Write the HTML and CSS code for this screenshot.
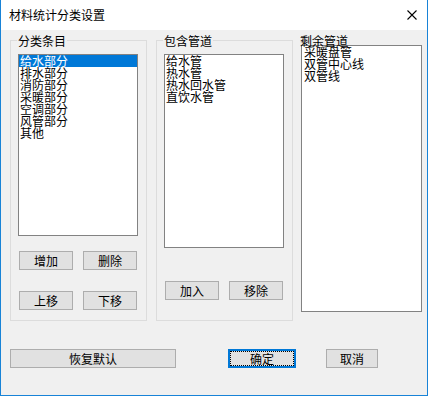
FILE: index.html
```html
<!DOCTYPE html>
<html lang="zh-CN">
<head>
    <meta charset="UTF-8">
    <title>材料统计分类设置</title>
    <link rel="stylesheet" href="styles.css">
</head>
<body>
    <div class="window">
        <div class="titlebar">
            <span class="title">材料统计分类设置</span>
            <svg class="close" width="10" height="10" viewBox="0 0 10 10">
                <path d="M0.5 0.5 L9.5 9.5 M9.5 0.5 L0.5 9.5" stroke="#000" stroke-width="1.1" fill="none"/>
            </svg>
        </div>

        <div class="dialog-body">
            <div class="panels">
                <div class="group group-cat">
                    <span class="group-title">分类条目</span>
                    <ul class="listbox list-cat">
                        <li class="selected">给水部分</li>
                        <li>排水部分</li>
                        <li>消防部分</li>
                        <li>采暖部分</li>
                        <li>空调部分</li>
                        <li>风管部分</li>
                        <li>其他</li>
                    </ul>
                    <div class="btn-row">
                        <button class="button">增加</button>
                        <button class="button">删除</button>
                    </div>
                    <div class="btn-row row-2">
                        <button class="button">上移</button>
                        <button class="button">下移</button>
                    </div>
                </div>

                <div class="group group-pipe">
                    <span class="group-title">包含管道</span>
                    <ul class="listbox list-pipe">
                        <li>给水管</li>
                        <li>热水管</li>
                        <li>热水回水管</li>
                        <li>直饮水管</li>
                    </ul>
                    <div class="btn-row">
                        <button class="button">加入</button>
                        <button class="button">移除</button>
                    </div>
                </div>

                <div class="remain">
                    <span class="remain-title">剩余管道</span>
                    <ul class="listbox list-remain">
                        <li>采暖盘管</li>
                        <li>双管中心线</li>
                        <li>双管线</li>
                    </ul>
                </div>
            </div>

            <div class="footer">
                <button class="button btn-reset">恢复默认</button>
                <button class="button btn-ok">确定</button>
                <button class="button btn-cancel">取消</button>
            </div>
        </div>
    </div>
</body>
</html>
```

FILE: styles.css
```css
* {
    margin: 0;
    padding: 0;
    box-sizing: border-box;
}

body {
    font-family: "Noto Sans CJK SC", "Microsoft YaHei", sans-serif;
    font-size: 12px;
    color: #000;
    background: #f0f0f0;
}

.window {
    width: 428px;
    height: 396px;
    display: flex;
    flex-direction: column;
    border: 1px solid #1883d7;
    border-top: none;
    background: #f0f0f0;
}

.titlebar {
    height: 30px;
    flex: none;
    display: flex;
    align-items: center;
    justify-content: space-between;
    padding: 0 10px 0 8px;
    background: #fff;
}

.title {
    line-height: 14px;
}

.close {
    display: block;
}

.dialog-body {
    flex: 1;
}

.panels {
    display: flex;
    align-items: flex-start;
    padding: 10px 0 0 9px;
}

.group {
    position: relative;
    width: 137px;
    height: 281px;
    border: 1px solid #dcdcdc;
    padding: 13px 0 0 7px;
}

.group-pipe {
    margin-left: 9px;
}

.group-title {
    position: absolute;
    top: -7px;
    left: 6px;
    padding: 0 1px;
    line-height: 13px;
    background: #f0f0f0;
}

.listbox {
    list-style: none;
    width: 120px;
    background: #fff;
    border: 1px solid #828282;
    line-height: 12px;
}

.listbox li {
    padding-left: 1px;
    white-space: nowrap;
}

.listbox .selected {
    background: #0078d7;
    color: #fff;
}

.list-cat {
    height: 182px;
}

.list-pipe {
    height: 194px;
}

.btn-row {
    display: flex;
    gap: 10px;
    padding-left: 1px;
}

.group-cat .btn-row {
    margin-top: 15px;
}

.group-cat .row-2 {
    margin-top: 21px;
}

.group-pipe .btn-row {
    margin-top: 33px;
}

.button {
    width: 54px;
    height: 19px;
    padding: 0;
    font: inherit;
    line-height: 17px;
    color: #000;
    background: #e1e1e1;
    border: 1px solid #adadad;
}

.remain {
    margin: -6px 0 0 8px;
}

.remain-title {
    display: block;
    position: relative;
    z-index: 1;
    line-height: 13px;
    margin-left: -1px;
}

.list-remain {
    width: 121px;
    height: 267px;
    margin-top: -2px;
}

.list-remain li {
    padding-left: 2px;
}

.footer {
    display: flex;
    align-items: center;
    margin-top: 28px;
    padding-left: 9px;
}

.btn-reset {
    width: 166px;
}

.btn-ok {
    width: 68px;
    margin-left: 52px;
    border: 2px solid #0078d7;
    line-height: 15px;
    outline: 1px dotted #000;
    outline-offset: -3px;
}

.btn-cancel {
    width: 52px;
    margin-left: 30px;
}
```
